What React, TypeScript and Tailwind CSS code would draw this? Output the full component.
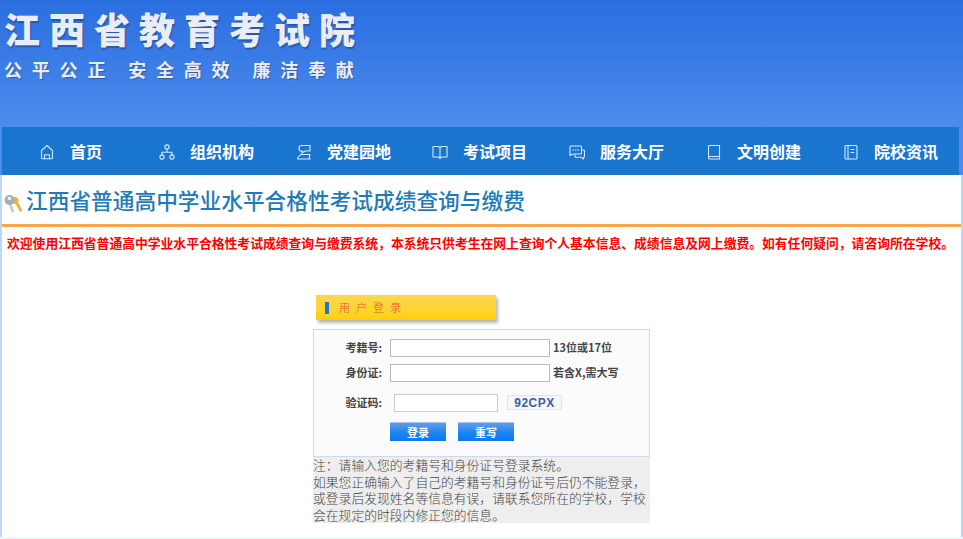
import type { ReactNode } from "react";

const cjk = "font-['Noto_Sans_CJK_SC','Liberation_Sans',sans-serif]";

const stroke = {
  fill: "none",
  stroke: "currentColor",
  strokeWidth: 1.1,
  strokeLinejoin: "round" as const,
  strokeLinecap: "round" as const,
};

function Icon({ children }: { children: ReactNode }) {
  return (
    <svg viewBox="0 0 16 16" width={16} height={16} className="shrink-0 mt-[2px] text-[#d5e9fb]" {...stroke}>
      {children}
    </svg>
  );
}

const navItems = [
  {
    label: "首页",
    className: "ml-[37px]",
    icon: (
      <>
        <path d="M2.500 6.500 8 1.500l5.500 5V14a.8.8 0 0 1-.8.8H3.300a.8.8 0 0 1-.8-.8z" />
        <path d="M5.500 14.800v-4h5v4" />
      </>
    ),
  },
  {
    label: "组织机构",
    className: "ml-[57px]",
    icon: (
      <>
        <circle cx="8" cy="3" r="2.100" />
        <circle cx="3" cy="13" r="2.100" />
        <circle cx="13" cy="13" r="2.100" />
        <path d="M8 5.100v3.200M3 10.900V8.300h10v2.600" />
      </>
    ),
  },
  {
    label: "党建园地",
    className: "ml-[42px]",
    icon: (
      <>
        {/* flag on a rolled base */}
        <path d="M3 4c0-1.500 1-2.500 2.500-2.500H14V7H9l-1.500 1.200L6 7H4.500C3.500 7 3 5.500 3 4z" />
        <path d="M6 7v3.500h7.500" />
        <path d="M1.500 15c.5-2.500 2-4 4.500-4.500M1.500 15H14c-.8-1-.8-3 0-4.500" />
      </>
    ),
  },
  {
    label: "考试项目",
    className: "ml-[41px]",
    icon: (
      <>
        <path d="M1 2.500h5.500L8 3.700l1.500-1.200H15V13H9.500L8 14.300 6.500 13H1z" />
        <path d="M8 3.700v10.600" />
      </>
    ),
  },
  {
    label: "服务大厅",
    className: "ml-[42px]",
    icon: (
      <>
        <path d="M1.800 2h9.700q1 0 1 1v6q0 1-1 1H4L1 11.500V3q0-1 .8-1z" />
        <path d="M13 6h1.500q1 0 1 1v5.500q0 .8-1 .8V15l-2-1.700H7q-1 0-1-1v-1.500" />
        <path d="M4.300 6h.1M6.700 6h.1M9.100 6h.1" strokeWidth={1.500} />
      </>
    ),
  },
  {
    label: "文明创建",
    className: "ml-[42px]",
    icon: (
      <path d="M2.500 12.500V2.300q0-.8.8-.8h10.200v13.500H4q-1.500 0-1.500-1.300t1.500-1.200h9.500" />
    ),
  },
  {
    label: "院校资讯",
    className: "ml-[42px]",
    icon: (
      <>
        <rect x="2" y="1.500" width="12" height="13.500" rx="1" />
        <path d="M5 1.500V15M8 5.500h3M8 8.500h3" />
      </>
    ),
  },
];

const fieldRow = "flex items-center h-[19px] text-[11px] font-bold text-[#444]";
const blueButton =
  "w-[56px] h-[19px] text-[11px] font-bold text-white border-t border-[#a8c8ee] bg-gradient-to-b from-[#5f9ce6] via-[#1c86f2] to-[#0a78f0]";

export default function App() {
  return (
    <div className={`w-[963px] h-[539px] overflow-hidden bg-[#eef5fc] ${cjk}`}>
      {/* banner */}
      <header className="h-[127px] pl-[4px] pt-[6px] bg-gradient-to-b from-[#2a6ee0] to-[#4c8ced] text-[#e9edf6]">
        <div className="text-[36px] leading-[44px] font-black tracking-[9px] [text-shadow:1px_2px_1px_rgba(40,60,120,0.55)]">
          江西省教育考试院
        </div>
        <div className="flex gap-[13px] mt-[7px] text-[18px] leading-[24px] font-bold tracking-[9.800px] [text-shadow:1px_1px_1px_rgba(40,60,120,0.55)]">
          <span>公平公正</span>
          <span>安全高效</span>
          <span>廉洁奉献</span>
        </div>
      </header>

      <div className="pl-[2px] pr-[4px] bg-[#4c8ced]">
        <nav className="h-[48px] flex items-center bg-[#1a75cf] text-white">
          {navItems.map((item) => (
            <div key={item.label} className={`flex items-center gap-[15px] ${item.className}`}>
              <Icon>{item.icon}</Icon>
              <span className="text-[16px] leading-[22px] font-bold">{item.label}</span>
            </div>
          ))}
        </nav>
      </div>

      <main className="h-[362px] border-l-2 border-r-2 border-[#bcd8f5] bg-white">
        {/* page title */}
        <div className="h-[52px] flex items-center pt-[1px] border-b-[3px] border-[#f5a94e]">
          <svg viewBox="0 0 20 20" width={20} height={20} className="ml-[1px] mt-[7px] shrink-0">
            <path d="M11 7l6 11 2.500-1.500-6-11z" fill="#e6b540" />
            <circle cx="12" cy="6.500" r="3.500" fill="#e6b540" />
            <path d="M5 9l4 10 2.500-1L8 8z" fill="#c8ccc4" />
            <circle cx="6.500" cy="6" r="5" fill="#a4afb2" />
            <circle cx="6.500" cy="4.500" r="1.800" fill="#eef2f2" />
          </svg>
          <h1 className="ml-[3px] text-[21.700px] leading-[30px] font-medium text-[#1f7bb8] whitespace-nowrap">
            江西省普通高中学业水平合格性考试成绩查询与缴费
          </h1>
        </div>

        <p className="mt-[7px] ml-[5px] text-[12.800px] leading-[18px] font-bold text-[#f00] whitespace-nowrap">
          欢迎使用江西省普通高中学业水平合格性考试成绩查询与缴费系统，本系统只供考生在网上查询个人基本信息、成绩信息及网上缴费。如有任何疑问，请咨询所在学校。
        </p>

        {/* login */}
        <section className="mt-[43px] ml-[311px] w-[337px]">
          <div className="ml-[3px] w-[180px] h-[25px] flex items-center pl-[9px] gap-[10px] bg-gradient-to-b from-[#fbd84c] to-[#ffd000] shadow-[2px_3px_3px_rgba(90,90,90,0.45)]">
            <span className="w-[4px] h-[12px] bg-[#1f78c8]" />
            <span className="text-[11px] font-light tracking-[6px] text-[#e8502a]">用户登录</span>
          </div>

          <form className="mt-[9px] h-[128px] pt-[8px] bg-[#fbfbfb] border border-[#c8dbf0]">
            <div className={fieldRow}>
              <label className="w-[68px] text-right">考籍号:</label>
              <input className="ml-[8px] w-[160px] h-[18px] bg-white border border-[#bbb]" />
              <span className="ml-[3px]">13位或17位</span>
            </div>
            <div className={`${fieldRow} mt-[6px]`}>
              <label className="w-[68px] text-right">身份证:</label>
              <input className="ml-[8px] w-[160px] h-[18px] bg-white border border-[#bbb]" />
              <span className="ml-[3px]">若含X,需大写</span>
            </div>
            <div className={`${fieldRow} mt-[11px]`}>
              <label className="w-[68px] text-right">验证码:</label>
              <input className="ml-[12px] w-[104px] h-[18px] bg-white border border-[#ccc]" />
              <span className="ml-[9px] w-[55px] h-[15px] flex items-center justify-center bg-[#f5f7fa] border border-[#e0e6ee] font-['Liberation_Sans',sans-serif] text-[12px] tracking-[0.500px] text-[#3f5f9f]">
                92CPX
              </span>
            </div>
            <div className="flex gap-[12px] ml-[76px] mt-[10px]">
              <button type="button" className={blueButton}>登录</button>
              <button type="button" className={blueButton}>重写</button>
            </div>
          </form>

          <p className="h-[66px] bg-[#eeeeee] text-[12.800px] leading-[16.700px] font-light text-[#444]">
            注：请输入您的考籍号和身份证号登录系统。
            <br />
            如果您正确输入了自己的考籍号和身份证号后仍不能登录，或登录后发现姓名等信息有误，请联系您所在的学校，学校会在规定的时段内修正您的信息。
          </p>
        </section>
      </main>
    </div>
  );
}
